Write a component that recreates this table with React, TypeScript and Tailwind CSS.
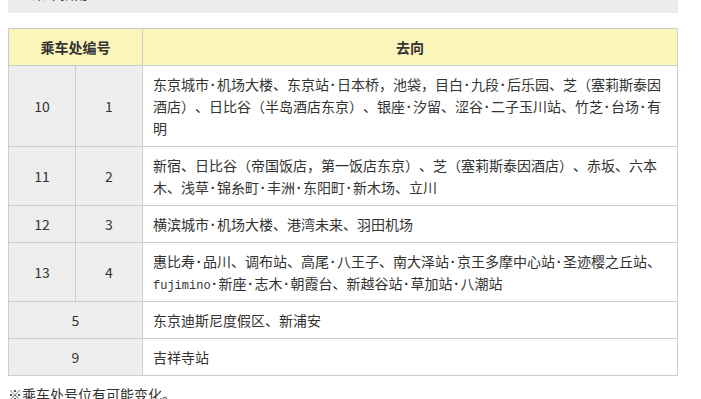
import React from "react";

type Row = {
  a: string;
  b?: string;
  lines: string[];
};

const rows: Row[] = [
  {
    a: "10",
    b: "1",
    lines: [
      "东京城市·机场大楼、东京站·日本桥，池袋，目白·九段·后乐园、芝（塞莉斯泰因",
      "酒店）、日比谷（半岛酒店东京）、银座·汐留、涩谷·二子玉川站、竹芝·台场·有",
      "明",
    ],
  },
  {
    a: "11",
    b: "2",
    lines: [
      "新宿、日比谷（帝国饭店，第一饭店东京）、芝（塞莉斯泰因酒店）、赤坂、六本",
      "木、浅草·锦糸町·丰洲·东阳町·新木场、立川",
    ],
  },
  { a: "12", b: "3", lines: ["横滨城市·机场大楼、港湾未来、羽田机场"] },
  {
    a: "13",
    b: "4",
    lines: [
      "惠比寿·品川、调布站、高尾·八王子、南大泽站·京王多摩中心站·圣迹樱之丘站、",
      "fujimino·新座·志木·朝霞台、新越谷站·草加站·八潮站",
    ],
  },
  { a: "5", lines: ["东京迪斯尼度假区、新浦安"] },
  { a: "9", lines: ["吉祥寺站"] },
];

// middle dots are half width in the original font
function Line({ text }: { text: string }) {
  const parts = text.split("·");
  return (
    <div className="h-[22px] whitespace-nowrap">
      {parts.map((p, i) => (
        <React.Fragment key={i}>
          {i > 0 && (
            <span className="inline-block w-[8px] text-center font-['Liberation_Sans',sans-serif] font-bold leading-[14px]">
              ·
            </span>
          )}
          {p.startsWith("fujimino") ? (
            <>
              <span className="font-['Liberation_Mono',monospace] text-[12px] leading-none">fujimino</span>
              {p.slice(8)}
            </>
          ) : (
            p
          )}
        </React.Fragment>
      ))}
    </div>
  );
}

export default function App() {
  return (
    <div className="min-h-[399px] overflow-hidden bg-white px-2 text-[14px] leading-[22px] text-[#333] font-['Noto_Sans_CJK_SC',sans-serif] [text-spacing-trim:space-all]">
      {/* info box, top part scrolled off */}
      <div className="-mt-[18px] w-[670px] bg-[#ececec] pb-[9px] pl-6">
        <p>乘车指南</p>
      </div>

      <table className="mt-[15px] w-[670px] table-fixed border-collapse border border-[#cccccc]">
        <colgroup>
          <col className="w-[67px]" />
          <col className="w-[67px]" />
          <col />
        </colgroup>
        <thead>
          <tr className="bg-[#fbf5b9]">
            <th colSpan={2} className="border border-[#cccccc] py-[7px] text-center font-bold">
              乘车处编号
            </th>
            <th className="border border-[#cccccc] py-[7px] text-center font-bold">去向</th>
          </tr>
        </thead>
        <tbody>
          {rows.map((r, i) => (
            <tr key={i}>
              {r.b ? (
                <>
                  <td className="border border-[#cccccc] bg-[#eeeeee] text-center align-middle">{r.a}</td>
                  <td className="border border-[#cccccc] bg-[#eeeeee] text-center align-middle">{r.b}</td>
                </>
              ) : (
                <td colSpan={2} className="border border-[#cccccc] bg-[#eeeeee] text-center align-middle">
                  {r.a}
                </td>
              )}
              <td className="border border-[#cccccc] py-[7px] pl-[10px] pr-2 align-middle">
                {r.lines.map((l, j) => (
                  <Line key={j} text={l} />
                ))}
              </td>
            </tr>
          ))}
        </tbody>
      </table>

      <p className="mt-[7px]">※乘车处号位有可能变化。</p>
    </div>
  );
}
